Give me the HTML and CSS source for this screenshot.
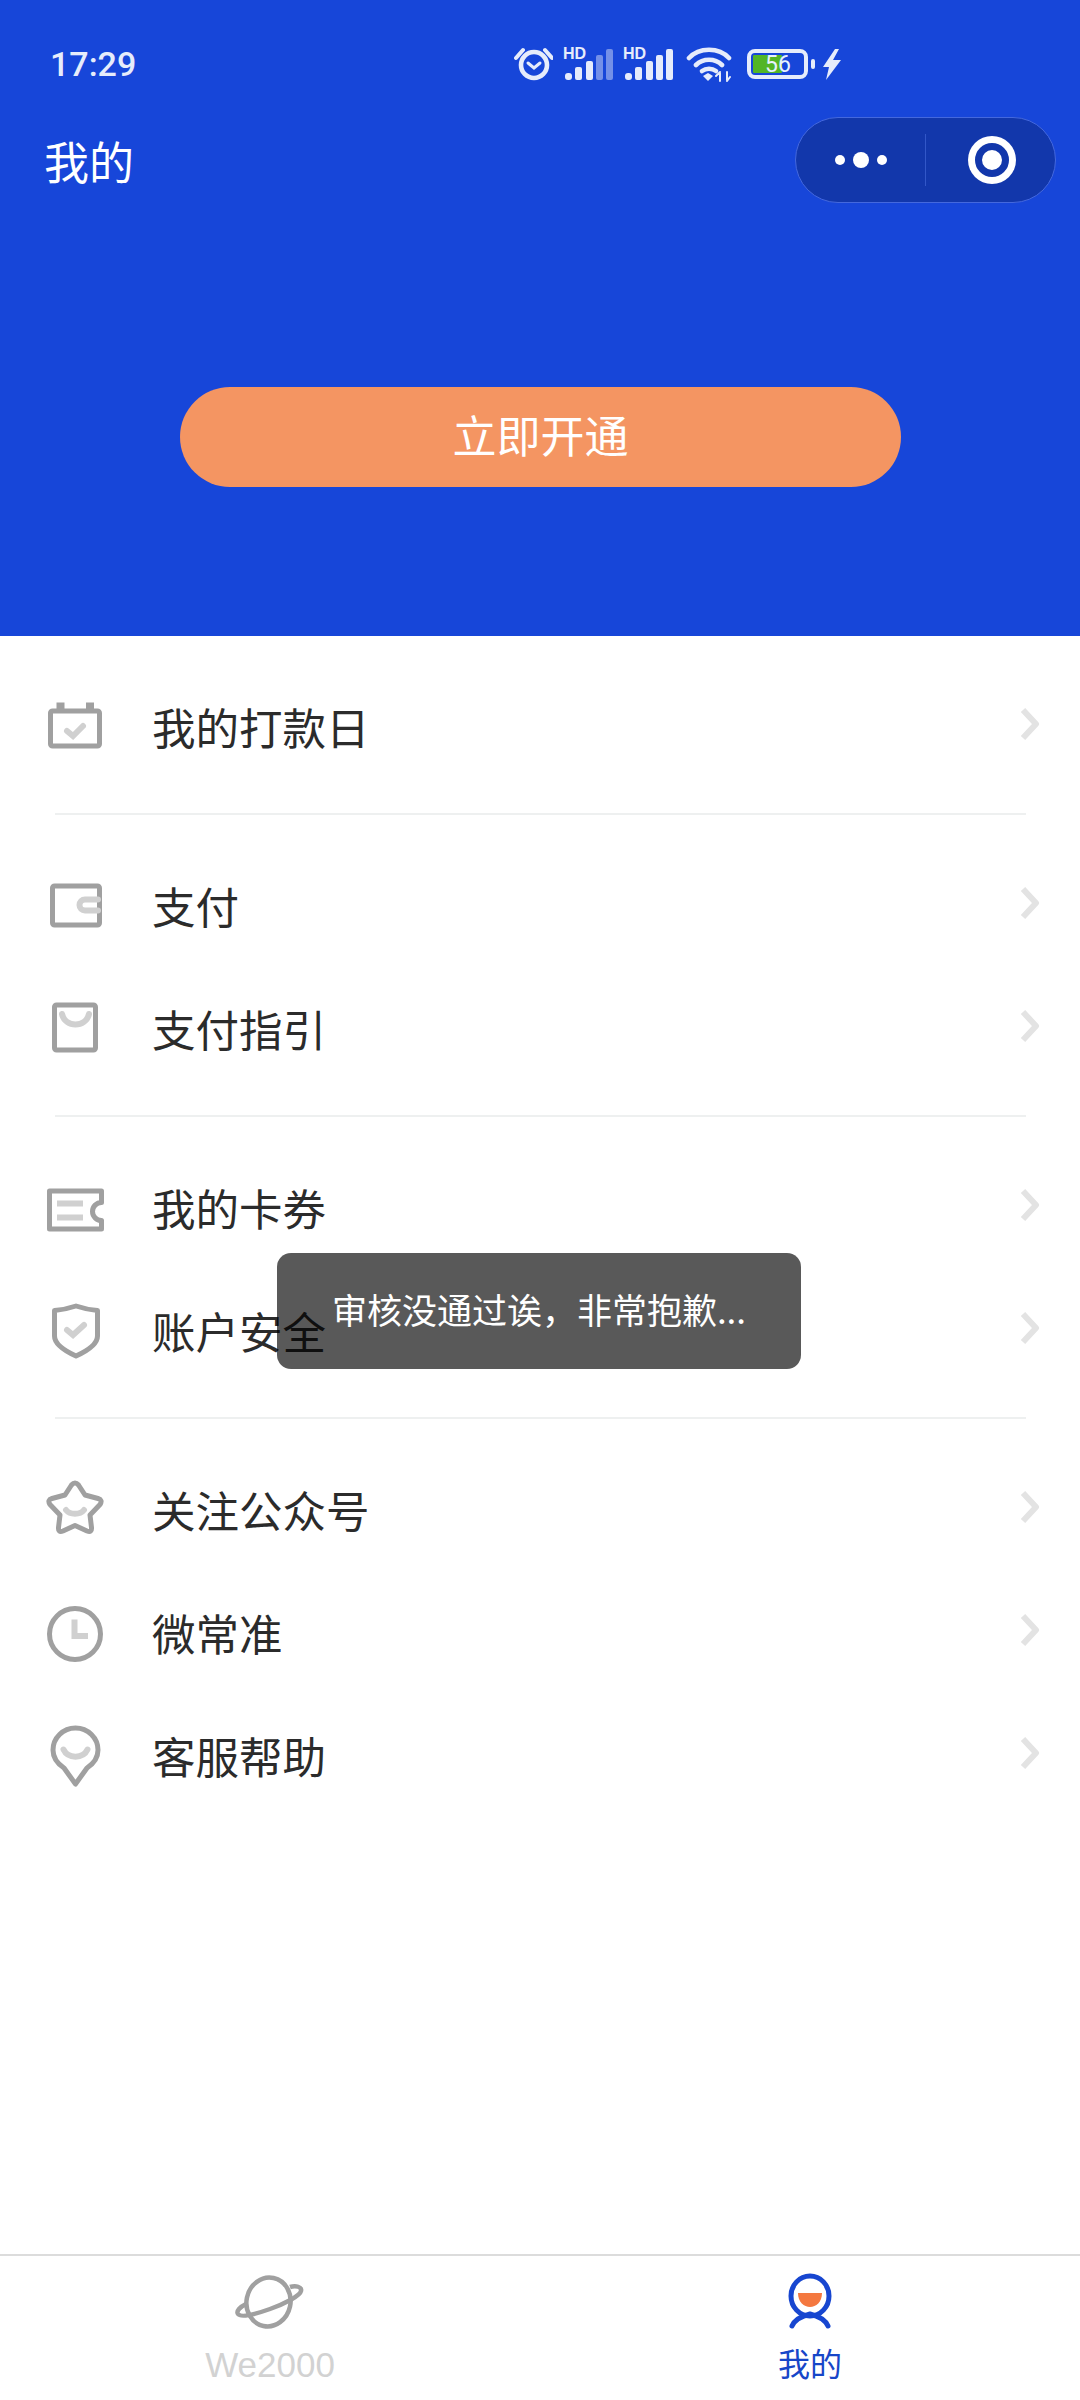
FILE: index.html
```html
<!DOCTYPE html>
<html lang="zh-CN">
<head>
    <meta charset="UTF-8">
    <meta name="viewport" content="width=device-width, initial-scale=1.0">
    <title>我的</title>
    <link rel="stylesheet" href="styles.css">
</head>
<body>

<!-- Blue header: status bar, nav and open button -->
<header class="header">
    <div class="status-bar">
        <span class="time">17:29</span>
        <div class="status-icons">
            <svg class="st-alarm" width="40" height="34" viewBox="0 0 40 34">
                <circle cx="21" cy="18" r="13" class="st-line st-bold"/>
                <path d="M3 11L10 3M32 3L39 11" class="st-line"/>
                <path d="M15 16L21 21L27 16" class="st-line st-thin"/>
            </svg>
            <svg class="st-signal" width="50" height="40" viewBox="0 -3 50 40">
                <text x="0" y="12" class="st-hd">HD</text>
                <rect x="2" y="26" width="7" height="7" rx="3" class="st-bar"/>
                <rect x="12" y="20" width="7" height="13" rx="2" class="st-bar"/>
                <rect x="23" y="14" width="7" height="19" rx="2" class="st-bar"/>
                <rect x="33" y="8" width="7" height="25" rx="2" class="st-bar st-dim"/>
                <rect x="43" y="2" width="7" height="31" rx="2" class="st-bar st-dim"/>
            </svg>
            <svg class="st-signal" width="50" height="40" viewBox="0 -3 50 40">
                <text x="0" y="12" class="st-hd">HD</text>
                <rect x="2" y="26" width="7" height="7" rx="3" class="st-bar"/>
                <rect x="12" y="20" width="7" height="13" rx="2" class="st-bar"/>
                <rect x="23" y="14" width="7" height="19" rx="2" class="st-bar"/>
                <rect x="33" y="8" width="7" height="25" rx="2" class="st-bar"/>
                <rect x="43" y="2" width="7" height="31" rx="2" class="st-bar"/>
            </svg>
            <svg class="st-wifi" width="46" height="36" viewBox="0 0 46 36">
                <path d="M3 12C13 1 33 1 43 12M10 19C17 12 29 12 36 19" class="st-line st-bold"/>
                <path d="M16 25C20 22 26 22 30 25" class="st-line st-bold"/>
                <path d="M17 30L22 27L27 30L22 35Z" class="st-fill"/>
                <path d="M34 35V27M30 30L34 26M41 26V34M41 35L44 31" class="st-line st-hair"/>
            </svg>
            <svg class="st-battery" width="68" height="30" viewBox="0 0 68 30">
                <rect x="2" y="2" width="57" height="26" rx="6" class="st-line"/>
                <rect x="6" y="6" width="29" height="18" rx="1" fill="#52b526"/>
                <rect x="64" y="10" width="4" height="10" rx="2" class="st-fill"/>
                <text x="31" y="23" text-anchor="middle" class="st-level">56</text>
            </svg>
            <svg class="st-bolt" width="18" height="31" viewBox="0 0 18 31">
                <path d="M12 0L0 18H6L3 31L18 11H10L16 0Z" class="st-fill"/>
            </svg>
        </div>
    </div>

    <div class="nav">
        <span class="nav-title">我的</span>
        <div class="capsule">
            <div class="capsule-more">
                <i class="dot"></i><i class="dot dot-big"></i><i class="dot"></i>
            </div>
            <div class="capsule-line"></div>
            <div class="capsule-target"><i class="target-core"></i></div>
        </div>
    </div>

    <button class="open-btn">立即开通</button>
</header>

<!-- Menu groups -->
<main class="menu">
    <section class="group">
        <div class="row">
            <svg class="row-icon" viewBox="0 0 60 60">
                <rect x="5.5" y="13" width="49" height="35" rx="2" class="ic-main"/>
                <path d="M15.5 4.5V12M45 4.5V12" class="ic-main ic-tab"/>
                <path d="M22 33L28 38L38 28" class="ic-soft"/>
            </svg>
            <span class="row-label">我的打款日</span>
            <svg class="chevron" viewBox="0 0 20 36"><path d="M3 4L16 18L3 32"/></svg>
        </div>
    </section>
    <section class="group">
        <div class="row">
            <svg class="row-icon" viewBox="0 0 60 60">
                <rect x="7.5" y="9" width="47" height="39" rx="2" class="ic-main"/>
                <path d="M53 22.5H40a5.5 5.5 0 0 0 0 11H53" class="ic-soft"/>
            </svg>
            <span class="row-label">支付</span>
            <svg class="chevron" viewBox="0 0 20 36"><path d="M3 4L16 18L3 32"/></svg>
        </div>
        <div class="row">
            <svg class="row-icon" viewBox="0 0 60 60">
                <rect x="9.5" y="5" width="41" height="45" rx="2" class="ic-main"/>
                <path d="M17 14C20 28 41 28 44 14" class="ic-soft"/>
            </svg>
            <span class="row-label">支付指引</span>
            <svg class="chevron" viewBox="0 0 20 36"><path d="M3 4L16 18L3 32"/></svg>
        </div>
    </section>
    <section class="group">
        <div class="row">
            <svg class="row-icon" viewBox="0 0 60 60">
                <path d="M4.5 12H56.5V23.5a9 9 0 0 0 0 18V50H4.5Z" class="ic-main"/>
                <path d="M12 24.5H38M12 38.5H38" class="ic-soft ic-flat"/>
            </svg>
            <span class="row-label">我的卡券</span>
            <svg class="chevron" viewBox="0 0 20 36"><path d="M3 4L16 18L3 32"/></svg>
        </div>
        <div class="row">
            <svg class="row-icon" viewBox="0 0 60 60">
                <path d="M31 4C37 6 46 8 52.5 8.5V34C52.5 42 42 49 31 54C20 49 9.5 42 9.5 34V8.5C16 8 25 6 31 4Z" class="ic-main"/>
                <path d="M22 28L28 33L39 23" class="ic-soft"/>
            </svg>
            <span class="row-label">账户安全</span>
            <svg class="chevron" viewBox="0 0 20 36"><path d="M3 4L16 18L3 32"/></svg>
        </div>
    </section>
    <section class="group">
        <div class="row">
            <svg class="row-icon" viewBox="0 0 60 60">
                <path d="M26.5 4Q30 0 33.5 4L40 14L53 17.5Q58 19 55 23.5L45 34L46.5 46.5Q47 52 42 50L30 44.5L18 50Q13 52 13.5 46.5L15 34L5 23.5Q2 19 7 17.5L20 14Z" class="ic-main"/>
                <path d="M21 29C25 34 35 34 39 29" class="ic-soft"/>
            </svg>
            <span class="row-label">关注公众号</span>
            <svg class="chevron" viewBox="0 0 20 36"><path d="M3 4L16 18L3 32"/></svg>
        </div>
        <div class="row">
            <svg class="row-icon" viewBox="0 0 60 60">
                <circle cx="30" cy="30" r="25.5" class="ic-main"/>
                <path d="M29.5 15.5V32H43" class="ic-soft ic-flat"/>
            </svg>
            <span class="row-label">微常准</span>
            <svg class="chevron" viewBox="0 0 20 36"><path d="M3 4L16 18L3 32"/></svg>
        </div>
        <div class="row">
            <svg class="row-icon" viewBox="0 0 60 60">
                <path d="M30.5 1C43 1 53 11 53 23C53 31 48 37 42 41L30.5 57L19 41C13 37 8 31 8 23C8 11 18 1 30.5 1Z" class="ic-main"/>
                <path d="M18.5 22.5C23 32 38 32 42.5 22.5" class="ic-soft"/>
            </svg>
            <span class="row-label">客服帮助</span>
            <svg class="chevron" viewBox="0 0 20 36"><path d="M3 4L16 18L3 32"/></svg>
        </div>
    </section>
</main>

<!-- Bottom tabs -->
<nav class="tabbar">
    <div class="tab">
        <svg class="tab-icon" width="70" height="60" viewBox="0 0 70 60">
            <ellipse cx="33.5" cy="30" rx="22" ry="24.5" transform="rotate(12 33.5 30)" class="tab-planet"/>
            <path d="M55 15C61 13 67 15 66 19C65 24 49 32 35 37C21 42 6 46 3 42C1 39 5 35 11 32" class="tab-planet"/>
        </svg>
        <span class="tab-label tab-label-latin">We2000</span>
    </div>
    <div class="tab tab-active">
        <svg class="tab-icon" width="60" height="60" viewBox="0 0 60 60">
            <ellipse cx="30" cy="24" rx="19" ry="20" class="tab-person"/>
            <path d="M18 21H42C42 30 36 35 30 35C24 35 18 30 18 21Z" fill="#f4783f"/>
            <path d="M12 54C15 47 22 44 30 42C38 44 45 47 48 54" class="tab-person"/>
        </svg>
        <span class="tab-label">我的</span>
    </div>
</nav>

<div class="toast">审核没通过诶，非常抱歉...</div>

</body>
</html>
```

FILE: styles.css
```css
/* Basic styling */
body {
    margin: 0;
    height: 2400px;
    display: flex;
    flex-direction: column;
    position: relative;
    background: #fff;
    color: #2b2b2b;
    font-family: "Noto Sans CJK SC", "Noto Sans", sans-serif;
}

/* Header */
.header {
    height: 636px;
    flex: none;
    background: #1746d9;
    color: #fff;
}
.status-bar {
    height: 56px;
    padding-top: 36px;
    padding-left: 50px;
    display: flex;
    align-items: center;
}
.time {
    width: 90px;
    font-family: Roboto, sans-serif;
    font-size: 34px;
    font-weight: 500;
    color: #e6ecfb;
}
.status-icons {
    margin-left: 373px;
    display: flex;
    align-items: center;
}
.st-alarm { margin-right: 10px; }
.st-signal { margin-right: 10px; }
.st-signal + .st-wifi { margin-left: 3px; margin-right: 15px; }
.st-battery { margin-right: 8px; }
.st-line {
    fill: none;
    stroke: #e6ecfb;
    stroke-width: 4;
    stroke-linecap: round;
}
.st-bold { stroke-width: 4.6; }
.st-thin { stroke-width: 3; }
.st-hair { stroke-width: 2; }
.st-fill { fill: #e6ecfb; }
.st-bar { fill: #e6ecfb; }
.st-dim { opacity: 0.45; }
.st-hd {
    fill: #e6ecfb;
    font-family: "Liberation Sans", sans-serif;
    font-size: 16px;
    font-weight: 700;
}
.st-level {
    fill: #e6f2ff;
    font-family: Roboto, sans-serif;
    font-size: 23px;
}

.nav {
    height: 86px;
    margin-top: 25px;
    padding: 0 24px 0 44px;
    display: flex;
    align-items: center;
    justify-content: space-between;
}
.nav-title {
    font-size: 45px;
}
.capsule {
    width: 259px;
    height: 84px;
    border: 1px solid #4468dd;
    border-radius: 43px;
    background: #1237ab;
    display: flex;
    align-items: center;
}
.capsule-more {
    width: 129px;
    display: flex;
    align-items: center;
    justify-content: center;
    gap: 8px;
}
.dot {
    width: 10px;
    height: 10px;
    border-radius: 50%;
    background: #fff;
}
.dot-big {
    width: 16px;
    height: 16px;
}
.capsule-line {
    width: 1px;
    height: 52px;
    background: #3257c8;
}
.capsule-target {
    flex: 1;
    padding-left: 3px;
    display: flex;
    align-items: center;
    justify-content: center;
}
.target-core {
    width: 20px;
    height: 20px;
    border: 7px solid #1237ab;
    border-radius: 50%;
    background: #fff;
    box-shadow: 0 0 0 7px #fff;
}

.open-btn {
    display: block;
    width: 721px;
    height: 100px;
    margin: 184px 0 0 180px;
    padding: 0 0 6px;
    border: none;
    border-radius: 50px;
    background: #f49562;
    color: #fff;
    font-family: inherit;
    font-size: 44px;
}

/* Menu */
.menu {
    flex: 1;
}
.group {
    margin: 0 54px 0 55px;
    padding: 30px 0 24px;
    border-bottom: 2px solid #eef0f0;
}
.group:last-child {
    border-bottom: none;
}
.row {
    height: 123px;
    margin: 0 -54px 0 -55px;
    display: flex;
    align-items: center;
}
.row-icon {
    width: 60px;
    height: 60px;
    margin-left: 45px;
    overflow: visible;
}
.row-label {
    margin: 0 0 2px 47px;
    font-size: 43.5px;
}
.chevron {
    width: 20px;
    height: 36px;
    margin: 0 40px 7px auto;
    fill: none;
    stroke: #e3e3e3;
    stroke-width: 6;
    stroke-linejoin: round;
}
.ic-main {
    fill: none;
    stroke: #a0a0a0;
    stroke-width: 5;
    stroke-linejoin: round;
}
.ic-tab { stroke-width: 8; }
.ic-soft {
    fill: none;
    stroke: #d0d0d0;
    stroke-width: 6;
    stroke-linecap: round;
}
.ic-flat { stroke-linecap: butt; }

/* Bottom tabs */
.tabbar {
    height: 144px;
    flex: none;
    border-top: 2px solid #dcdcdc;
    display: flex;
}
.tab {
    flex: 1;
    padding-top: 16px;
    display: flex;
    flex-direction: column;
    align-items: center;
}
.tab-icon { flex: none; }
.tab-planet {
    fill: none;
    stroke: #a0a0a0;
    stroke-width: 4.5;
}
.tab-person {
    fill: none;
    stroke: #1746d0;
    stroke-width: 5;
    stroke-linecap: round;
}
.tab-label {
    margin-top: 10px;
    line-height: 40px;
    font-size: 32px;
    color: #1746c8;
}
.tab-label-latin {
    margin-top: 13px;
    font-family: "Liberation Sans", sans-serif;
    font-size: 35px;
    color: #d2d2d2;
}

/* Toast sits over the list, the row text shows through it */
.toast {
    position: absolute;
    left: 277px;
    top: 1253px;
    width: 524px;
    height: 116px;
    border-radius: 14px;
    background: rgba(0, 0, 0, 0.65);
    color: #fff;
    font-size: 35px;
    line-height: 112px;
    text-align: center;
}
```
